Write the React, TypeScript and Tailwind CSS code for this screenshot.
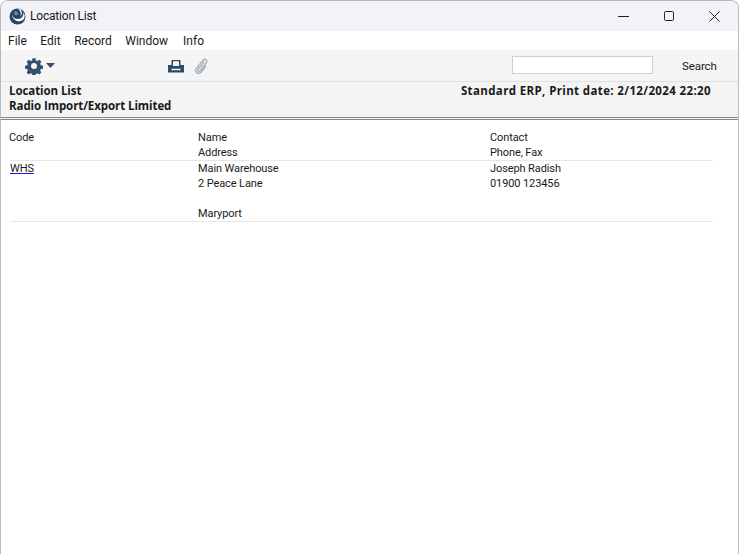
import React from "react";

const font = { fontFamily: 'Roboto, "Open Sans", sans-serif' };
const boldFont = { fontFamily: '"Open Sans", "Noto Sans", sans-serif' };

function Logo() {
  return (
    <svg width="17" height="17" viewBox="0 0 17 17">
      <circle cx="8.5" cy="8.5" r="8" fill="#23466a" />
      <path d="M2.6 5.5C3.5 10.5 8.5 12.5 12.5 9.8C14 8.7 14.6 7 14.2 4.6C16.4 7 16 10.4 13.8 12C10 14.8 3.6 13 2.6 5.5Z" fill="#ffffff" />
      <path d="M8.8 0.6C11 2.5 12.6 5 11.4 8.2C13.4 6.4 13.4 3 11 0.9Z" fill="#ffffff" />
      <path d="M6 3.5C7.5 3 9 4 9 5.5C9 7 7.5 7.5 6.3 7C5 6.3 4.8 4.2 6 3.5Z" fill="#6f8aa5" />
    </svg>
  );
}

function Row({ a, b, c }: { a?: React.ReactNode; b?: string; c?: string }) {
  return (
    <div className="flex h-[15px] items-center leading-[15px]">
      <div className="w-[189px]">{a}</div>
      <div className="w-[292px]">{b}</div>
      <div>{c}</div>
    </div>
  );
}

export default function App() {
  return (
    <div
      className="relative flex h-[554px] w-[739px] flex-col overflow-hidden rounded-t-[8px] border border-b-0 border-[#b9b9b9] bg-white text-[11px] tracking-[-0.1px] text-[#1a1a1a]"
      style={font}
    >
      <div className="flex h-[30px] items-center bg-[#f1f3f9] pl-[8px]">
        <Logo />
        <span className="ml-[4px] text-[12px] tracking-[-0.2px]">Location List</span>
        <div className="ml-auto flex items-center">
          <svg width="45" height="30" viewBox="0 0 45 30"><path d="M16 15.5H27" stroke="#222" strokeWidth="1" /></svg>
          <svg width="45" height="30" viewBox="0 0 45 30"><rect x="17.5" y="10.5" width="9" height="9" rx="1.2" fill="none" stroke="#222" strokeWidth="1" /></svg>
          <svg width="45" height="30" viewBox="0 0 45 30" className="mr-[1px]"><path d="M17.5 10.5L27.5 20.5M27.5 10.5L17.5 20.5" stroke="#222" strokeWidth="1" /></svg>
        </div>
      </div>
      <div className="flex h-[19px] items-center gap-[13.5px] bg-white pl-[7px] text-[12px] tracking-normal">
        <span>File</span>
        <span>Edit</span>
        <span>Record</span>
        <span>Window</span>
        <span className="ml-[1.5px]">Info</span>
      </div>
      <div className="flex h-[32px] items-center border-b border-[#e0e0e0] bg-[#f5f5f5]">
        <svg width="18" height="18" viewBox="0 0 24 24" className="ml-[24px]" fill="#33516f">
          <path fillRule="evenodd" d="M10 1.5h4l.6 3 1.9.8 2.6-1.7 2.8 2.8-1.7 2.6.8 1.9 3 .6v4l-3 .6-.8 1.9 1.7 2.6-2.8 2.8-2.6-1.7-1.9.8-.6 3h-4l-.6-3-1.9-.8-2.6 1.7-2.8-2.8 1.7-2.6-.8-1.9-3-.6v-4l3-.6.8-1.9-1.7-2.6 2.8-2.8 2.6 1.7 1.9-.8zM12 8a4 4 0 1 0 0 8 4 4 0 0 0 0-8z" />
        </svg>
        <svg width="9" height="5" viewBox="0 0 9 5" className="ml-[3px]"><path d="M0 0H9L4.5 5Z" fill="#33516f" /></svg>
        <svg width="16" height="13" viewBox="0 0 16 13" className="ml-[113px] mt-[2px]" fill="#2a4a6b">
          <path fillRule="evenodd" d="M3.5 0H12.5V5H16V12.5H0V5H3.5ZM5 1.3V6H11V1.3ZM3.5 8.8V10.2H12.5V8.8Z" />
        </svg>
        <svg width="14" height="17" viewBox="0 0 14 17" className="ml-[10px] mt-[2px]" fill="none" stroke="#a8b2bc" strokeWidth="1.4">
          <path d="M10.5 3.5L4 11.5C3 13 4.8 14.3 6 13L12.3 5C14 2.6 11 0 9 2.2L2.3 10.5C0 13.5 4 17.2 7 14.3L12 8" />
        </svg>
        <input className="mb-[1px] ml-[304px] h-[18px] w-[141px] border border-[#cfcfcf] bg-white" />
        <span className="ml-[29px] mt-[2px] text-[11.5px]">Search</span>
      </div>
      <div className="flex h-[35px] justify-between bg-[#f4f4f4] pl-[8px] pr-[27px] pt-[1px] text-[11.5px] font-bold leading-[15px] tracking-normal" style={boldFont}>
        <div className="tracking-[-0.08px]">
          <div>Location List</div>
          <div>Radio Import/Export Limited</div>
        </div>
        <div className="tracking-[0.37px]">Standard ERP, Print date: 2/12/2024 22:20</div>
      </div>
      <div className="h-[3px] border-y border-[#8c8480] bg-[#f4f4f4]" />
      <div className="pl-[9px] pr-[25px] pt-[10px]">
        <div className="-ml-[1px]">
          <Row a="Code" b="Name" c="Contact" />
          <Row b="Address" c="Phone, Fax" />
        </div>
        <div className="h-px bg-[#ebe6dd]" />
        <div className="-ml-[1px]">
          <Row a={<span className="ml-[1px] underline decoration-[#1a1ad0]">WHS</span>} b="Main Warehouse" c="Joseph Radish" />
          <Row b="2 Peace Lane" c="01900 123456" />
          <Row />
          <Row b="Maryport" />
        </div>
        <div className="h-px bg-[#ebe6dd]" />
      </div>
    </div>
  );
}
